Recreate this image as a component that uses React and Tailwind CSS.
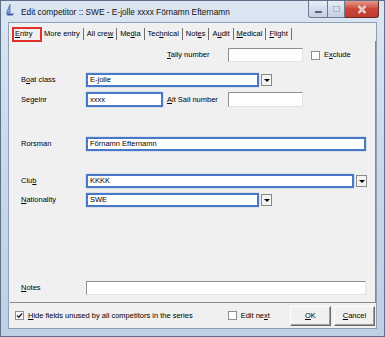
import React from 'react'

const FONT = { fontFamily: '"Liberation Sans", Arial, sans-serif' }

function U({ children }) {
  return <span className="underline underline-offset-[1px] decoration-[0.5px]">{children}</span>
}

function Field({ w, blue, children, className = '' }) {
  return (
    <div
      className={`h-full bg-white flex items-center pl-[2px] ${
        blue
          ? 'border-2 border-[#4a78c8] shadow-[0_0_1px_#6f93d6]'
          : 'border border-t-[#8e8e8e] border-l-[#8e8e8e] border-b-[#e3e3e3] border-r-[#e3e3e3]'
      } ${className}`}
      style={{ width: w }}
    >
      {children}
    </div>
  )
}

function DropBtn() {
  return (
    <div className="ml-[2px] w-[11px] h-[12px] border border-[#8a8a8a] bg-[#f4f4f4] flex items-center justify-center">
      <div className="w-0 h-0 border-l-[3px] border-r-[3px] border-t-[3px] border-l-transparent border-r-transparent border-t-black" />
    </div>
  )
}

function Check({ checked }) {
  return (
    <div className="w-[9px] h-[9px] bg-white border border-[#8e8f8f] flex items-center justify-center">
      {checked && (
        <svg width="7" height="7" viewBox="0 0 7 7">
          <path d="M1 3.5 L2.8 5.3 L6 1.5" stroke="#222" strokeWidth="1.4" fill="none" />
        </svg>
      )}
    </div>
  )
}

function Label({ children }) {
  return <div className="w-[65px] shrink-0">{children}</div>
}

const tabs = [
  [<><U>E</U>ntry</>],
  [<>More entry</>],
  [<>All cre<U>w</U></>],
  [<>Me<U>d</U>ia</>],
  [<>Tec<U>h</U>nical</>],
  [<>Not<U>e</U>s</>],
  [<>A<U>u</U>dit</>],
  [<><U>M</U>edical</>],
  [<><U>F</U>light</>],
]

export default function App() {
  return (
    <div
      className="w-[385px] h-[337px] relative overflow-hidden text-[7.5px] text-black bg-gradient-to-b from-[#dbe6f2] via-[#c9d8ea] to-[#bfd0e4] border border-[#5f7089]"
      style={FONT}
    >
      {/* title bar */}
      <div className="h-[21px] flex items-start">
        <div className="mt-[3px] ml-[4px] w-[10px] h-[12px]">
          <svg width="10" height="12" viewBox="0 0 10 12">
            <path d="M5 0.5 L5 9 L1.5 9 Z" fill="#8fa6df" stroke="#3c59b8" strokeWidth="0.7" />
            <path d="M1 9.5 L9 9.5 L7.5 11.5 L2.5 11.5 Z" fill="#3c59b8" />
          </svg>
        </div>
        <div className="mt-[5px] ml-[6px] text-[8.3px] text-[#111]">
          Edit competitor :: SWE - E-jolle xxxx Förnamn Efternamn
        </div>
        <div className="ml-auto mr-[5px] flex h-[17px]">
          <div className="w-[20px] h-full rounded-bl-[3px] border border-[#6c7a8e] border-t-0 bg-gradient-to-b from-[#e6edf6] to-[#c2d0e2] flex items-end justify-center pb-[4px]">
            <div className="w-[7px] h-[2px] bg-white border border-[#5b6474]" />
          </div>
          <div className="w-[17px] h-full border-b border-r border-[#6c7a8e] bg-gradient-to-b from-[#e6edf6] to-[#c2d0e2] flex items-center justify-center">
            <div className="w-[7px] h-[6px] border border-[#a9b6c8]" />
          </div>
          <div className="w-[34px] h-full rounded-br-[3px] border border-t-0 border-l-0 border-[#6a2a24] bg-gradient-to-b from-[#e2988c] via-[#c8463a] to-[#c13a2e] flex items-center justify-center">
            <svg width="10" height="9" viewBox="0 0 10 9">
              <path d="M1.5 1 L8.5 8 M8.5 1 L1.5 8" stroke="#fff" strokeWidth="2.2" />
              <path d="M1.5 1 L8.5 8 M8.5 1 L1.5 8" stroke="#6b2b25" strokeWidth="0.4" />
            </svg>
          </div>
        </div>
      </div>

      {/* client area */}
      <div className="mx-[7px] h-[307px] bg-[#f0f0f0] border border-[#8ea0b8] flex flex-col">
        {/* tab strip */}
        <div className="h-[14px] mt-[4px] ml-[3px] flex items-center">
          {tabs.map((t, i) => (
            <React.Fragment key={i}>
              <div
                className={`h-[15px] flex items-center ${
                  i === 0 ? 'border-2 border-[#e0302c] px-[1px] w-[30px]' : 'px-[2px]'
                }`}
              >
                {t[0]}
              </div>
              {i > 0 && <div className="w-px h-[12px] bg-[#6e6e6e] mx-[1px]" />}
            </React.Fragment>
          ))}
        </div>

        {/* tab page */}
        <div className="ml-[1px] w-[366px] h-[262px] border-r border-b border-[#8a8a8a] pl-[11px] flex flex-col">
          <div className="mt-[7px] h-[14px] flex items-center">
            <div className="ml-[146px] w-[61px]"><U>T</U>ally number</div>
            <Field w={75} />
            <div className="ml-[8px]"><Check /></div>
            <div className="ml-[4px]">E<U>x</U>clude</div>
          </div>
          <div className="mt-[11px] h-[14px] flex items-center">
            <Label>B<U>o</U>at class</Label>
            <Field w={173} blue>E-jolle</Field>
            <DropBtn />
          </div>
          <div className="mt-[5px] h-[15px] flex items-center">
            <Label>Segelnr</Label>
            <Field w={77} blue>xxxx</Field>
            <div className="ml-[4px] w-[61px]"><U>A</U>lt Sail number</div>
            <Field w={75} className="h-[14px]" />
          </div>
          <div className="mt-[30px] h-[14px] flex items-center">
            <Label>Rorsman</Label>
            <Field w={280} blue>Förnamn Efternamn</Field>
          </div>
          <div className="mt-[23px] h-[14px] flex items-center">
            <Label>Clu<U>b</U></Label>
            <Field w={268} blue>KKKK</Field>
            <DropBtn />
          </div>
          <div className="mt-[5px] h-[14px] flex items-center">
            <Label><U>N</U>ationality</Label>
            <Field w={173} blue>SWE</Field>
            <DropBtn />
          </div>
          <div className="mt-[74px] h-[14px] flex items-center">
            <Label><U>N</U>otes</Label>
            <Field w={280} />
          </div>
        </div>

        {/* bottom row */}
        <div className="flex-1 flex items-center pl-[6px]">
          <Check checked />
          <div className="ml-[4px]"><U>H</U>ide fields unused by all competitors in the series</div>
          <div className="ml-[35px]"><Check /></div>
          <div className="ml-[4px]">Edit ne<U>x</U>t</div>
          <div className="ml-[20px] w-[41px] h-[20px] border border-t-white border-l-white border-b-[#6a6a6a] border-r-[#6a6a6a] bg-[#f0f0f0] shadow-[inset_-1px_-1px_0_#a0a0a0] flex items-center justify-center">
            <U>O</U>K
          </div>
          <div className="ml-[3px] w-[41px] h-[20px] border border-t-white border-l-white border-b-[#6a6a6a] border-r-[#6a6a6a] bg-[#f0f0f0] shadow-[inset_-1px_-1px_0_#a0a0a0] flex items-center justify-center">
            <U>C</U>ancel
          </div>
        </div>
      </div>
    </div>
  )
}
